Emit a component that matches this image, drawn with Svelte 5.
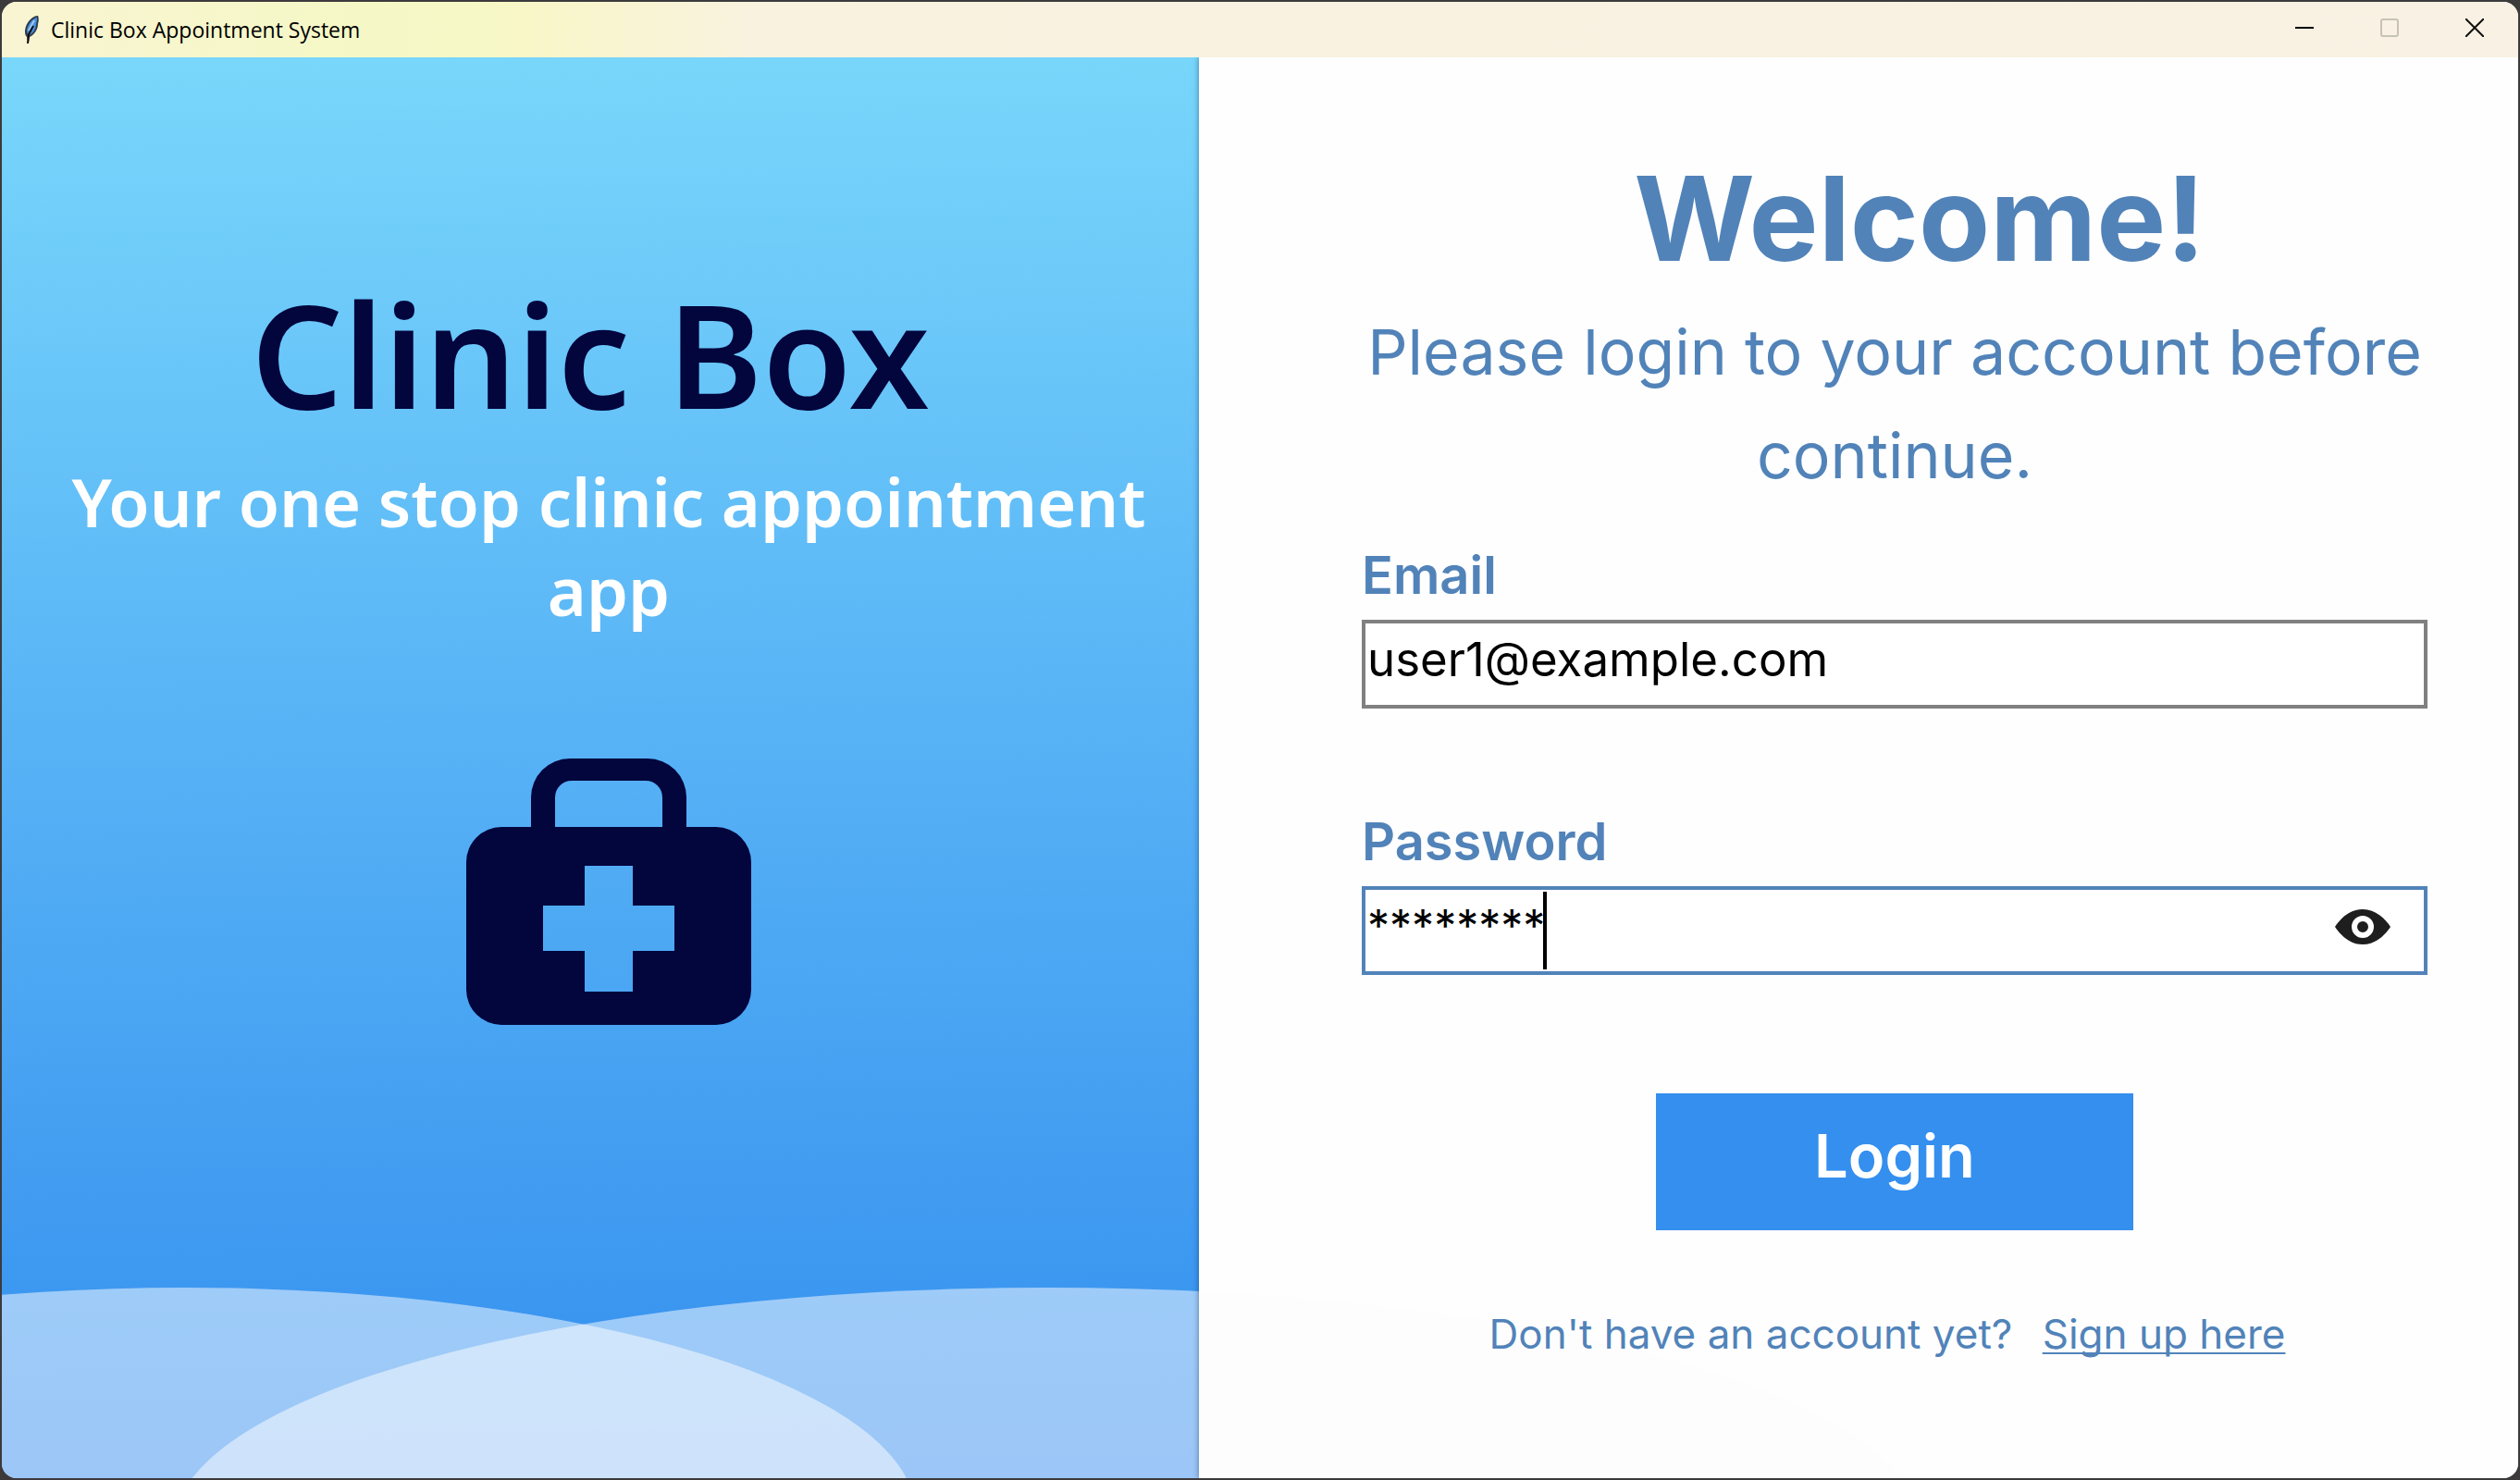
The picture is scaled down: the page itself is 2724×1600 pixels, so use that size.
<script>
  let email = $state('user1@example.com');
  let password = $state('********');
</script>

<div class="desktop">
  <div class="window">
    <header class="titlebar">
      <svg class="feather" viewBox="0 0 18 32" aria-hidden="true">
        <path d="M16 1C10 1 3 8 2 17c0 3 0 5 2 7l1 6h1l1-6c6-3 9-9 9-14 1-3 1-7 0-9Z" fill="#2d3c4c" />
        <path d="M15 3C10 4 5 10 4 17l1 5 4-8 1 1-3 7c5-3 7-8 7-12 1-3 1-5 1-7Z" fill="#4a8edb" />
        <path d="M12 6 6 17" stroke="#9ccbf2" stroke-width="2" />
        <path d="M11 12 6 21 5 31" fill="none" stroke="#111" stroke-width="2" />
      </svg>
      <span class="caption">Clinic Box Appointment System</span>
      <div class="controls">
        <button type="button" aria-label="Minimize">
          <svg viewBox="0 0 20 20"><path d="M0 10h20" stroke="#000" stroke-width="2" /></svg>
        </button>
        <button type="button" aria-label="Maximize" disabled>
          <svg viewBox="0 0 20 20"><rect x="1" y="1" width="18" height="18" rx="2" fill="none" stroke="#c7c2b7" stroke-width="2" /></svg>
        </button>
        <button type="button" aria-label="Close">
          <svg viewBox="0 0 20 20"><path d="M0 0 20 20M20 0 0 20" stroke="#111" stroke-width="2" /></svg>
        </button>
      </div>
    </header>

    <main class="body">
      <section class="brand">
        <svg class="waves" viewBox="0 0 1294 206" preserveAspectRatio="none" aria-hidden="true">
          <ellipse cx="198" cy="245" rx="790" ry="245" fill="#fff" fill-opacity="0.5" />
          <ellipse cx="1130" cy="260" rx="945" ry="260" fill="#fff" fill-opacity="0.5" />
        </svg>
        <h1>Clinic Box</h1>
        <p class="tagline">Your one stop clinic appointment app</p>
        <svg class="kit" viewBox="0 0 308 288" aria-hidden="true">
          <path fill="#03053d" fill-rule="evenodd" d="M38 74H70V42A42 42 0 0 1 112 0H196A42 42 0 0 1 238 42V74H270A38 38 0 0 1 308 112V250A38 38 0 0 1 270 288H38A38 38 0 0 1 0 250V112A38 38 0 0 1 38 74ZM96 74H212V42A18 18 0 0 0 194 24H114A18 18 0 0 0 96 42ZM128 116V159H83V208H128V252H180V208H225V159H180V116Z" />
        </svg>
      </section>

      <section class="login">
        <svg class="haze" viewBox="0 0 1426 206" preserveAspectRatio="none" aria-hidden="true">
          <ellipse cx="-164" cy="260" rx="945" ry="260" fill="#fdfdfd" />
        </svg>
        <form onsubmit={(e) => e.preventDefault()}>
          <h2>Welcome!</h2>
          <p class="lead">Please login to your account before continue.</p>

          <div class="group">
            <label for="email">Email</label>
            <div class="field">
              <input id="email" type="text" autocomplete="off" spellcheck="false" bind:value={email} />
            </div>
          </div>

          <div class="group">
            <label for="password">Password</label>
            <div class="field active">
              <input id="password" class="masked" type="text" autocomplete="off" spellcheck="false" bind:value={password} />
              <span class="caret"></span>
              <button class="reveal" type="button" aria-label="Show password">
                <svg viewBox="0 0 60 38">
                  <path d="M0 19C6 10 16 0 30 0S54 10 60 19C54 28 44 38 30 38S6 28 0 19Z" fill="#1e1e1e" />
                  <circle cx="30" cy="19" r="9" fill="#1e1e1e" stroke="#fff" stroke-width="6" />
                </svg>
              </button>
            </div>
          </div>

          <button class="submit" type="submit">Login</button>

          <p class="signup">Don't have an account yet? <a href="#signup">Sign up here</a></p>
        </form>
      </section>
    </main>
  </div>
</div>

<style>
  :global(body) {
    margin: 0;
    background: #3d3a3c;
  }

  .desktop {
    box-sizing: border-box;
    min-height: 100vh;
    padding: 2px;
    display: flex;
    background: #3d3a3c;
    font-family: Inter, 'Open Sans', sans-serif;
  }

  .window {
    flex: 1;
    display: flex;
    flex-direction: column;
    border-radius: 16px;
    overflow: hidden;
    background: #fff;
  }

  .titlebar {
    height: 60px;
    display: flex;
    align-items: center;
    padding: 0 1px 0 23px;
    background: linear-gradient(90deg, #f9f4d2 0%, #f5f8c6 14%, #f6f8c6 19%, #f9f6c8 21%, #f9f2df 30%, #f9f1e3 100%);
  }

  .feather {
    width: 18px;
    height: 32px;
  }

  .caption {
    margin-left: 12px;
    font: 23px/32px 'Open Sans', sans-serif;
    color: #000;
  }

  .controls {
    margin-left: auto;
    display: flex;
  }

  .controls button {
    width: 92px;
    height: 60px;
    padding: 0 0 4px;
    border: 0;
    background: none;
    display: grid;
    place-items: center;
  }

  .controls svg {
    width: 20px;
    height: 20px;
  }

  .body {
    flex: 1;
    display: grid;
    grid-template-columns: 1294fr 1426fr;
    overflow: hidden;
  }

  .brand {
    position: relative;
    display: flex;
    flex-direction: column;
    align-items: center;
    padding: 220px 40px 0 58px;
    text-align: center;
    background: linear-gradient(179deg, #79d7fb 0%, #54aff5 52%, #3b96f0 88%, #378cee 100%);
  }

  .waves,
  .haze {
    position: absolute;
    left: 0;
    bottom: 0;
    width: 100%;
    height: 206px;
  }

  h1 {
    margin: 0 40px 0 0;
    font: 600 156px/200px 'Noto Sans', sans-serif;
    color: #03053d;
  }

  .tagline {
    margin: 12px 0 0;
    font: 600 72px/96px 'Noto Sans', sans-serif;
    color: #fff;
  }

  .kit {
    width: 308px;
    height: 288px;
    margin-top: 134px;
  }

  .login {
    position: relative;
    padding: 106px 98px 0 176px;
    background: #fefefe;
    box-shadow: 0 0 6px rgba(0, 30, 80, 0.5);
    color: #5183b9;
  }

  form {
    position: relative;
    display: flex;
    flex-direction: column;
  }

  h2 {
    margin: 0 0 0 54px;
    font-size: 126px;
    font-weight: 700;
    line-height: 136px;
    text-align: center;
  }

  .lead {
    margin: 20px 0 0;
    font-size: 68px;
    line-height: 112px;
    text-align: center;
  }

  .group {
    display: flex;
    flex-direction: column;
    margin-bottom: 108px;
  }

  label {
    padding-bottom: 12px;
    font-size: 56px;
    font-weight: 600;
    line-height: 72px;
  }

  .lead + .group {
    margin-top: 38px;
  }

  .field {
    position: relative;
    display: flex;
    align-items: center;
    height: 88px;
    border: 4px solid #808080;
    background: #fff;
  }

  .field.active {
    border-color: #5183b9;
  }

  input {
    flex: 1;
    min-width: 0;
    height: 88px;
    box-sizing: border-box;
    padding: 0 2px 12px;
    border: 0;
    outline: 0;
    background: none;
    font: 51px/76px Inter, sans-serif;
    color: #000;
  }

  .masked {
    font-size: 48px;
  }

  .caret {
    position: absolute;
    left: 192px;
    top: 2px;
    bottom: 2px;
    width: 4px;
    background: #000;
  }

  .reveal {
    margin-right: 36px;
    padding: 0 0 8px;
    border: 0;
    background: none;
    display: flex;
  }

  .reveal svg {
    width: 60px;
    height: 38px;
  }

  .submit {
    align-self: center;
    width: 516px;
    height: 148px;
    margin-top: 20px;
    padding: 0 0 12px;
    border: 0;
    background: #358fef;
    color: #fff;
    font: 600 65px/80px Inter, sans-serif;
  }

  .signup {
    margin: 80px 16px 0 0;
    font-size: 44px;
    line-height: 64px;
    text-align: center;
  }

  a {
    margin-left: 20px;
    color: inherit;
    text-decoration-thickness: 2px;
    text-underline-offset: 4px;
    text-decoration-skip-ink: none;
  }
</style>
